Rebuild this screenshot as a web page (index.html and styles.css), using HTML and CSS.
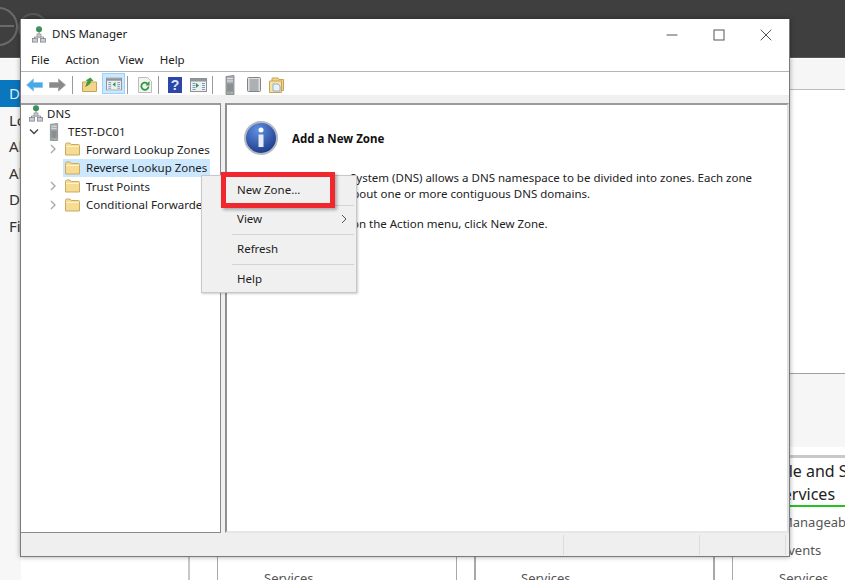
FILE: index.html
```html
<!DOCTYPE html>
<html lang="en">
<head>
<meta charset="utf-8">
<title>DNS Manager</title>
<link rel="stylesheet" href="styles.css">
</head>
<body>
<svg class="defs" width="0" height="0" aria-hidden="true">
  <symbol id="i-dns" viewBox="0 0 14 17">
    <path d="M7 5v4M2.500 13v-2h9v2" fill="none" stroke="#8a8f96"/>
    <rect x="5" y="8" width="4" height="3" fill="#c9ccd1" stroke="#8a8f96" stroke-width=".7"/>
    <rect x=".5" y="12.500" width="5" height="3.600" fill="#c9ccd1" stroke="#80858c" stroke-width=".8"/>
    <rect x="8.500" y="12.500" width="5" height="3.600" fill="#c9ccd1" stroke="#80858c" stroke-width=".8"/>
    <circle cx="7" cy="3.200" r="3" fill="#3b8f4a"/>
    <path d="M5 2.600c1-1.400 3-1.400 4 0-1 .9-3 .9-4 0z" fill="#3b87c9"/>
  </symbol>
  <symbol id="i-folder" viewBox="0 0 15 14">
    <path d="M.5 2.500q0-1.500 1.500-1.500h3l1.300 1.500h7.200q1 0 1 1v9.500h-14z" fill="#f6dc92" stroke="#c9aa66"/>
    <path d="M1 4.500h13" stroke="#fff2c4"/>
  </symbol>
  <symbol id="i-server" viewBox="0 0 10 20">
    <path d="M1 1.500 9 .5v19H1z" fill="#a9acb0" stroke="#7d8085" stroke-width=".8"/>
    <path d="M2 3.500h6M2 6h6" stroke="#e3e4e6"/>
    <path d="M2 8.500h6v8H2z" fill="#8b8e92"/>
    <rect x="3" y="17" width="2" height="1.500" fill="#6ec06a"/>
  </symbol>
  <symbol id="i-chevron" viewBox="0 0 8 10">
    <path d="M2 1l4 4-4 4" fill="none" stroke="#a6a6a6" stroke-width="1.300"/>
  </symbol>
  <symbol id="i-panel" viewBox="0 0 17 14">
    <rect x=".5" y=".5" width="16" height="13" fill="#eef0f2" stroke="#8d9296"/>
    <path d="M1 1h15v2.500H1z" fill="#8f979d"/>
    <path d="M2.500 5.500h3M2.500 7.500h3M2.500 9.500h3M2.500 11.500h3M12 5.500h3M12 7.500h3M12 9.500h3M12 11.500h3" stroke="#7f9ab4"/>
  </symbol>
</svg>

<div class="desk">
  <div class="topbar">
    <span class="round round-a"></span>
    <span class="round round-b"></span>
  </div>
  <ul class="side">
    <li class="side-item side-active">D</li>
    <li class="side-item">Lo</li>
    <li class="side-item">Al</li>
    <li class="side-item">Al</li>
    <li class="side-item">D</li>
    <li class="side-item">Fi</li>
  </ul>
  <div class="band band-top"></div>
  <div class="band band-mid"></div>
  <div class="tile-heading">
    <div class="tile-title">Role and Server</div>
    <div class="tile-title tile-title-2">Services</div>
    <div class="tile-rule"></div>
    <div class="tile-row tile-row-first">Manageability</div>
    <div class="tile-row">Events</div>
    <div class="tile-row tile-row-last">Services</div>
  </div>
  <div class="vline vline-a"></div>
  <div class="vline vline-b"></div>
  <div class="vline vline-c"></div>
  <div class="vline vline-d"></div>
  <div class="vline vline-e"></div>
  <div class="vline vline-f"></div>
  <div class="svc svc-a">Services</div>
  <div class="svc svc-b">Services</div>
</div>

<section class="window">
  <header class="titlebar">
    <svg class="title-icon"><use href="#i-dns"/></svg>
    <span class="title-text">DNS Manager</span>
    <div class="caption">
      <svg class="cap-btn" viewBox="0 0 12 12"><path d="M.5 6h11" stroke="#555" stroke-width="1"/></svg>
      <svg class="cap-btn" viewBox="0 0 12 12"><rect x="1" y="1" width="10" height="10" fill="none" stroke="#555" stroke-width="1"/></svg>
      <svg class="cap-btn" viewBox="0 0 12 12"><path d="M.7.7l10.600 10.600M11.300.7L.7 11.300" stroke="#555" stroke-width="1"/></svg>
    </div>
  </header>
  <nav class="menubar">
    <span class="menu-item">File</span>
    <span class="menu-item m-action">Action</span>
    <span class="menu-item m-view">View</span>
    <span class="menu-item m-help">Help</span>
  </nav>
  <div class="toolbar">
    <svg class="tb tb-back" viewBox="0 0 17 14"><path d="M.5 7 7.500 1v3.500h9v5h-9V13z" fill="#4aa8e8" stroke="#8cc9f2"/></svg>
    <svg class="tb tb-fwd" viewBox="0 0 17 14"><path d="M16.500 7 9.500 1v3.500h-9v5h9V13z" fill="#8a8a8a" stroke="#a8a8a8"/></svg>
    <span class="sep sep-a"></span>
    <svg class="tb tb-up" viewBox="0 0 15 15"><path d="M.5 5h14v9.500H.5z" fill="#f2d58b" stroke="#c6a35a"/><path d="M3 10 5.500 4 3.500 3.500 8.500.5l3 3.500-2 0C9 6 7 8.500 3 10z" fill="#3f9b3d"/></svg>
    <span class="tb-active">
      <svg class="tb-inner" viewBox="0 0 17 14"><use href="#i-panel"/><path d="M10 5v5L7 7.500z" fill="#2c9a49"/></svg>
    </span>
    <span class="sep sep-b"></span>
    <svg class="tb tb-refresh" viewBox="0 0 14 16"><path d="M.5.500h9l4 4v11H.5z" fill="#f4f4f4" stroke="#bcbcbc"/><path d="M10.500 9.500a3.600 3.600 0 1 1-1.200-3" fill="none" stroke="#2f9a3c" stroke-width="1.800"/><path d="M11.500 4v4.500H7.500z" fill="#2f9a3c"/></svg>
    <span class="sep sep-c"></span>
    <svg class="tb tb-q" viewBox="0 0 14 16"><rect width="14" height="16" fill="#2d47a8"/><text x="7" y="13" class="q-mark">?</text></svg>
    <svg class="tb tb-panel2" viewBox="0 0 17 14"><use href="#i-panel"/><path d="M6 5v5l3-2.500z" fill="#2c9a49"/></svg>
    <span class="sep sep-d"></span>
    <svg class="tb tb-server"><use href="#i-server"/></svg>
    <svg class="tb tb-list" viewBox="0 0 14 15"><rect x=".5" y=".5" width="13" height="14" rx="1" fill="#dfe0e1" stroke="#808488"/><path d="M2.500 3h9M2.500 5h9M2.500 7h9M2.500 9h9M2.500 11h9M2.500 13h9" stroke="#7c8085"/></svg>
    <svg class="tb tb-fold2" viewBox="0 0 15 16"><path d="M3 1h6l1 1.500h4.500v11H3z" fill="#f0d48c" stroke="#c6a35a"/><path d="M.5 4h12v11.500H.5z" fill="#f7e3a8" stroke="#c6a35a"/><path d="M4 7h5l2 2v5H4z" fill="#e9f1fa" stroke="#7f9ec2" stroke-width=".8"/></svg>
  </div>
  <div class="panes">
    <aside class="tree">
      <div class="tree-row lvl-0">
        <svg class="ico-dns"><use href="#i-dns"/></svg>
        <span>DNS</span>
      </div>
      <div class="tree-row lvl-1">
        <svg class="exp" viewBox="0 0 10 8"><path d="M1 1.500l4 4 4-4" fill="none" stroke="#404040" stroke-width="1.300"/></svg>
        <svg class="ico-server"><use href="#i-server"/></svg>
        <span class="srv-name">TEST-DC01</span>
      </div>
      <div class="tree-row lvl-2">
        <svg class="chev"><use href="#i-chevron"/></svg>
        <svg class="ico-folder"><use href="#i-folder"/></svg>
        <span>Forward Lookup Zones</span>
      </div>
      <div class="tree-row lvl-2 is-noexp">
        <span class="tree-sel">
          <svg class="ico-folder"><use href="#i-folder"/></svg>
          <span>Reverse Lookup Zones</span>
        </span>
      </div>
      <div class="tree-row lvl-2">
        <svg class="chev"><use href="#i-chevron"/></svg>
        <svg class="ico-folder"><use href="#i-folder"/></svg>
        <span>Trust Points</span>
      </div>
      <div class="tree-row lvl-2">
        <svg class="chev"><use href="#i-chevron"/></svg>
        <svg class="ico-folder"><use href="#i-folder"/></svg>
        <span>Conditional Forwarders</span>
      </div>
    </aside>
    <main class="detail">
      <div class="detail-head">
        <svg class="info" viewBox="0 0 34 34">
          <defs>
            <radialGradient id="blue" cx="40%" cy="25%" r="85%">
              <stop offset="0" stop-color="#5f8fe0"/>
              <stop offset="1" stop-color="#14307f"/>
            </radialGradient>
          </defs>
          <circle cx="17" cy="17" r="16" fill="url(#blue)" stroke="#b3b8c2" stroke-width="2"/>
          <circle cx="17" cy="9" r="2.500" fill="#fff"/>
          <path d="M14.500 13.500h5V26h-5z" fill="#e6ebf5"/>
        </svg>
        <h1 class="detail-title">Add a New Zone</h1>
      </div>
      <p class="detail-p">The Domain Name System (DNS) allows a DNS namespace to be divided into zones. Each zone<br>holds information about one or more contiguous DNS domains.</p>
      <p class="detail-p detail-p-2">To add a new zone, on the Action menu, click New Zone.</p>
    </main>
  </div>
  <footer class="status">
    <span class="status-cell status-a"></span>
    <span class="status-cell status-b"></span>
    <span class="status-cell status-c"></span>
  </footer>
</section>

<div class="ctx">
  <div class="ctx-item">New Zone...</div>
  <div class="ctx-sep"></div>
  <div class="ctx-item ctx-sub">View<svg class="ctx-arrow" viewBox="0 0 6 10"><path d="M1 1l4 4-4 4" fill="none" stroke="#555" stroke-width="1"/></svg></div>
  <div class="ctx-sep ctx-sep-up"></div>
  <div class="ctx-item">Refresh</div>
  <div class="ctx-sep ctx-sep-up"></div>
  <div class="ctx-item">Help</div>
</div>
<div class="callout"></div>
</body>
</html>
```
FILE: styles.css
```css
* { box-sizing: border-box; }
html, body {
  margin: 0;
  padding: 0;
  width: 845px;
  height: 580px;
  overflow: hidden;
  background: #fff;
  font-family: "Noto Sans", "Open Sans", "Liberation Sans", sans-serif;
  font-size: 11.5px;
  color: #222;
}
.defs { position: absolute; }

/* Background desktop application, sits behind the window */
.desk { position: absolute; inset: 0; overflow: hidden; background: #fff; }
.topbar { position: absolute; left: 0; top: 0; width: 845px; height: 58px; background: #3f3f3f; border-bottom: 1px solid #555; overflow: hidden; }
.round { position: absolute; border-radius: 50%; border: 2px solid #6a6a6a; }
.round-a { left: -21px; top: 7px; width: 39px; height: 39px; }
.round-a::after { content: ""; position: absolute; left: 12px; top: 16px; width: 21px; height: 2px; background: #6a6a6a; }
.round-b { left: 18px; top: 13px; width: 30px; height: 30px; border-color: #585858; }
.side { position: absolute; left: 0; top: 59px; width: 21px; height: 521px; margin: 0; padding: 21px 0 0; list-style: none; background: #f7f7f7; font-size: 15px; }
.side-item { height: 26.600px; line-height: 26.600px; padding-left: 9px; white-space: nowrap; color: #333; }
.side-active { background: #0a76bd; color: #dfeffa; }
.band { position: absolute; left: 789px; width: 56px; background: #f6f6f6; }
.band-top { top: 59px; height: 31px; border-bottom: 1px solid #bcbcbc; }
.band-mid { top: 373px; height: 74px; border-top: 1px solid #a0a0a0; }
.tile-heading { position: absolute; left: 732px; top: 455px; width: 180px; height: 125px; border-top: 3px solid #c9c9c9; padding: 0 0 0 55px; overflow: hidden; border-left: 1px solid #b0b0b0; background: #fff; white-space: nowrap; }
.tile-title { font-size: 16px; line-height: 24px; margin-left: -19px; margin-top: 1px; color: #222; }
.tile-title-2 { margin-top: -1px; margin-left: -14px; }
.tile-rule { height: 2px; background: #22c322; margin: -1px 0 0 -55px; }
.tile-row { font-size: 13px; color: #555; line-height: 28px; margin-left: -7px; }
.tile-row-first { margin-top: 1px; }
.tile-row-last { margin-left: -9px; }
.vline { position: absolute; top: 556px; height: 24px; width: 1px; background: #a8a8a8; }
.vline-a { left: 188px; width: 2px; background: #c8c8c8; }
.vline-b { left: 217px; }
.vline-c { left: 456px; }
.vline-d { left: 474px; width: 2px; }
.vline-e { left: 713px; width: 2px; }
.vline-f { left: 732px; }
.svc { position: absolute; top: 569px; font-size: 13px; color: #555; }
.svc-a { left: 264px; }
.svc-b { left: 521px; }

/* DNS Manager window */
.window {
  position: absolute;
  left: 20px;
  top: 19px;
  width: 770px;
  height: 538px;
  display: flex;
  flex-direction: column;
  background: #fff;
  border: 1px solid #7a7a7a;
  border-top: 0;
  box-shadow: 0 0 5px rgba(0, 0, 0, .35);
}
.titlebar { flex: none; height: 31px; display: flex; align-items: center; padding-left: 11px; }
.title-icon { width: 14px; height: 17px; }
.title-text { margin-left: 6px; padding-bottom: 2px; color: #1a1a1a; }
.caption { margin-left: auto; margin-right: 17px; display: flex; gap: 35px; }
.cap-btn { width: 12px; height: 12px; display: block; }
.menubar { flex: none; height: 22px; border-bottom: 1px solid #b5b5b5; display: flex; align-items: center; padding-left: 10px; }
.menu-item { color: #222; padding-bottom: 2px; }
.m-action { margin-left: 16px; }
.m-view { margin-left: 19px; }
.m-help { margin-left: 16px; }
.toolbar { flex: none; height: 23px; display: flex; align-items: center; padding-left: 5px; background: #fff; }
.tb { display: block; flex: none; margin-top: 2px; }
.tb-back { width: 17px; height: 14px; }
.tb-fwd { width: 17px; height: 14px; margin-left: 6px; }
.sep { display: block; flex: none; width: 1px; height: 18px; margin-top: 2px; background: #9a9a9a; }
.sep-a { margin-left: 6px; }
.tb-up { width: 15px; height: 15px; margin-left: 9px; }
.tb-active { flex: none; width: 23px; height: 21px; margin-left: 5px; background: #cce8ff; border: 1px solid #99d1ff; display: flex; align-items: center; justify-content: center; }
.tb-inner { width: 16px; height: 14px; }
.sep-b { margin-left: 2px; }
.tb-refresh { width: 14px; height: 16px; margin-left: 10px; }
.sep-c { margin-left: 6px; }
.tb-q { width: 14px; height: 16px; margin-left: 9px; }
.q-mark { font-family: "Liberation Sans", sans-serif; font-size: 14px; font-weight: bold; fill: #dfe6fa; text-anchor: middle; }
.tb-panel2 { width: 17px; height: 14px; margin-left: 8px; }
.sep-d { margin-left: 5px; }
.tb-server { width: 10px; height: 20px; margin-left: 12px; }
.tb-list { width: 14px; height: 15px; margin-left: 12px; }
.tb-fold2 { width: 15px; height: 16px; margin-left: 8px; }
.panes { flex: 1; min-height: 0; display: flex; background: #f0f0f0; padding-top: 8px; }
.tree { flex: none; width: 200px; background: #fff; border: 1px solid #8a8a8a; border-left: 0; overflow: hidden; white-space: nowrap; border-top: 2px solid #9a9a9a; }
.tree-row { height: 18.500px; display: flex; align-items: center; color: #222; }
.lvl-0 { padding-left: 8px; margin-top: -1px; }
.ico-dns { width: 14px; height: 17px; margin-right: 4px; flex: none; }
.lvl-1 { padding-left: 8px; margin-bottom: -1px; }
.exp { width: 10px; height: 8px; flex: none; }
.ico-server { width: 10px; height: 18px; margin-left: 10px; flex: none; }
.srv-name { margin-left: 9px; }
.lvl-2 { padding-left: 28px; }
.chev { width: 8px; height: 10px; flex: none; margin-right: 8px; }
.ico-folder { width: 15px; height: 14px; flex: none; margin-right: 6px; }
.is-noexp { padding-left: 42px; }
.tree-sel { display: flex; align-items: center; height: 18px; width: 147px; padding-left: 2px; background: #cce8ff; }
.detail { flex: 1; min-width: 0; margin-left: 4px; background: #fff; border-left: 2px solid #8f8f8f; border-top: 2px solid #9a9a9a; border-right: 2px solid #e0e0e0; border-bottom: 2px solid #e6e6e6; overflow: hidden; padding: 0 0 0 17px; white-space: nowrap; }
.detail-head { display: flex; align-items: center; margin-top: 16px; }
.info { width: 34px; height: 34px; flex: none; }
.detail-title { margin: 0 0 0 14px; font-size: 11.500px; font-weight: bold; color: #111; }
.detail-p { margin: 15px 0 0 2px; line-height: 16px; color: #222; }
.detail-p-2 { margin-top: 14px; }
.status { flex: none; height: 23px; display: flex; background: #efefef; padding-top: 2px; }
.status-cell { display: block; height: 20px; }
.status-a { width: 542px; }
.status-b { width: 136px; border-left: 1px solid #dcdcdc; }
.status-c { width: 87px; border-left: 1px solid #dcdcdc; border-right: 1px solid #dcdcdc; }

/* Context menu + red annotation, over the window */
.ctx { position: absolute; left: 201px; top: 175px; width: 156px; height: 118px; background: #f0f0f0; border: 1px solid #c8c8c8; box-shadow: 1px 1px 2px rgba(0, 0, 0, .2); padding: 1px 2px 0 30px; }
.ctx-item { height: 29px; display: flex; align-items: center; padding: 0 0 2px 5px; color: #222; margin-top: -1px; }
.ctx-item:first-child { height: 28px; }
.ctx-sub { position: relative; }
.ctx-arrow { position: absolute; right: 7px; top: 9px; width: 6px; height: 10px; }
.ctx-sep { height: 1px; background: #d4d4d4; margin-top: 1px; }
.ctx-sep-up { margin-top: 0; margin-bottom: 1px; }
.callout { position: absolute; left: 221px; top: 172px; width: 114px; height: 36px; border: 5px solid #f0282d; box-shadow: 2px 2px 3px rgba(0, 0, 0, .3); }
```
